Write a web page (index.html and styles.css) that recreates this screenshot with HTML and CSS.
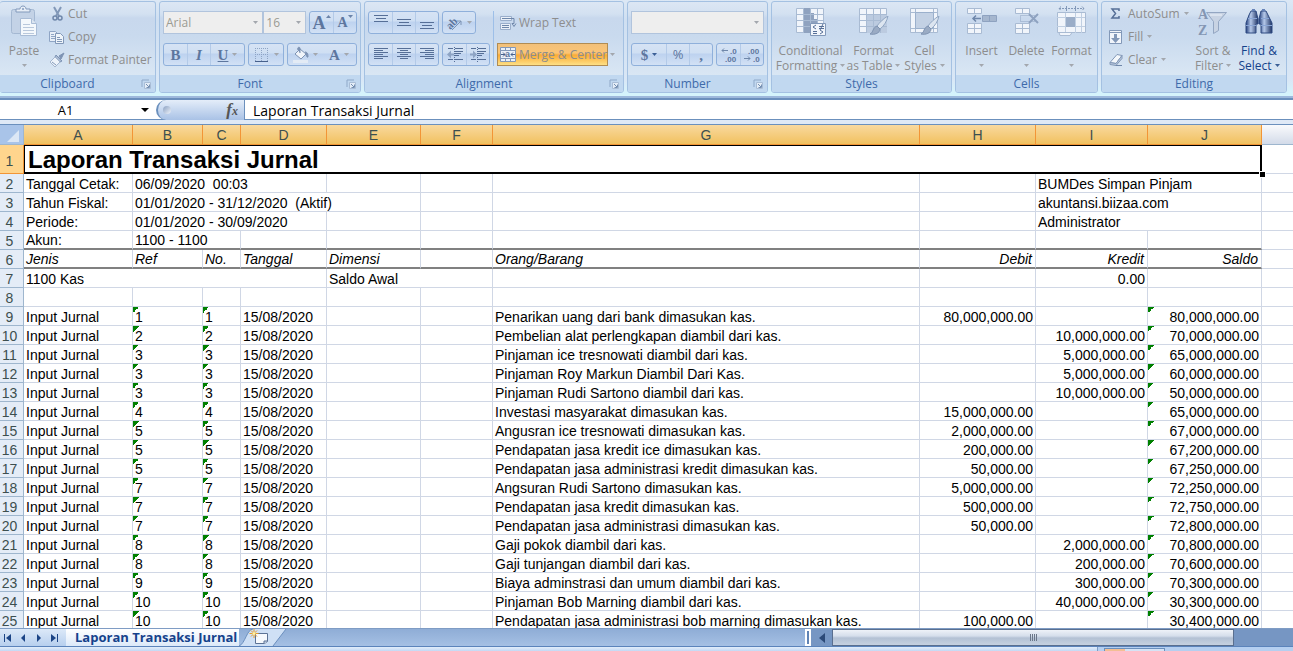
FILE: index.html
```html
<!DOCTYPE html>
<html lang="id">
<head>
<meta charset="utf-8">
<title>Laporan Transaksi Jurnal</title>
<link rel="stylesheet" href="styles.css">
</head>
<body>
<svg class="defs" aria-hidden="true">
  <symbol id="launcher" viewBox="0 0 10 10"><path d="M1 8V1h7" fill="none" stroke="#8fa9c9"/><path d="M3.500 9.500v-6h6v6z" fill="#e4edf7" stroke="#a9bdd6"/><path d="M5 5l3 3M8.500 5.500v3h-3" fill="none" stroke="#7590b3"/></symbol>
  <symbol id="caret" viewBox="0 0 5 3"><path d="M0 0h5L2.500 3z" fill="currentColor"/></symbol>
  <symbol id="brush" viewBox="0 0 20 20"><path d="M19 0c-4 2-9 7-11 10l3 3c4-3 7-8 8-13z" fill="#dce5f0" stroke="#8fa5c2"/><path d="M8 10l3 3c0 4-5 6-10 5 4-2 2-6 7-8z" fill="#9aabc4" stroke="#7f93b1"/></symbol>
</svg>

<header class="ribbon">
  <section class="group clipboard">
    <div class="body">
      <button class="big paste">
        <svg class="ico32" viewBox="0 0 32 32"><rect x="3.500" y="3.500" width="23" height="24" rx="2" fill="#c3d2e6" stroke="#a4b8d2"/><path d="M8 6h14V3h-4c0-4-6-4-6 0H8z" fill="#e6edf6" stroke="#8299bb"/><circle cx="15" cy="3" r="1" fill="#8299bb"/><path d="M12.500 12.500h11l5 5v12h-16z" fill="#f4f8fc" stroke="#a9bcd6"/><path d="M23.500 12.500v5h5" fill="#dbe5f1" stroke="#a9bcd6"/><path d="M15 18.500h7M15 21.500h11M15 24.500h11M15 27.500h11" stroke="#b9c8dc"/></svg>
        <span>Paste</span><svg class="caret"><use href="#caret"/></svg>
      </button>
      <div class="stack">
        <button class="small"><svg class="ico16" viewBox="0 0 16 16"><path d="M5 1l5 9M12 1L7 10" stroke="#8298b8" stroke-width="2"/><circle cx="6" cy="12" r="2" fill="none" stroke="#6f87aa" stroke-width="1.500"/><circle cx="11" cy="12" r="2" fill="none" stroke="#6f87aa" stroke-width="1.500"/></svg>Cut</button>
        <button class="small"><svg class="ico16" viewBox="0 0 16 16"><path d="M.5 2.500h6l2 2v8h-8z" fill="#e8eff8" stroke="#8fa5c5"/><path d="M2 5.500h3M2 7.500h4M2 9.500h4" stroke="#8fa5c5"/><path d="M6.500 4.500h5l3 3v7h-8z" fill="#eef4fa" stroke="#8298b8"/><path d="M8 8.500h3M8 10.500h5M8 12.500h5" stroke="#8298b8"/></svg>Copy</button>
        <button class="small"><svg class="ico16" viewBox="0 0 16 16"><path d="M15 1l-5 3 2 3z" fill="#7d93b4" stroke="#7d93b4"/><path d="M7 3l6 6-2 1-5-5z" fill="#a9bad2" stroke="#7d93b4"/><path d="M6 5L1 10l5 5 5-5z" fill="#edf3fa" stroke="#a4b6cf"/><path d="M3 10l4 3" stroke="#8298b8"/></svg>Format Painter</button>
      </div>
    </div>
    <footer><h2>Clipboard</h2><button class="launch" aria-label="Clipboard options"><svg><use href="#launcher"/></svg></button></footer>
  </section>

  <section class="group font">
    <div class="body rows">
      <div class="row">
        <span class="combo name"><select aria-label="Font"><option>Arial</option></select><svg class="caret"><use href="#caret"/></svg></span><span class="combo size"><select aria-label="Font size"><option>16</option></select><svg class="caret"><use href="#caret"/></svg></span>
        <div class="set"><button class="w24 grow">A<svg class="tick" viewBox="0 0 5 3"><path d="M0 3h5L2.500 0z"/></svg></button><button class="w24 grow less">A<svg class="tick" viewBox="0 0 5 3"><path d="M0 0h5L2.500 3z"/></svg></button></div>
      </div>
      <div class="row">
        <div class="set"><button class="w24 serif b">B</button><button class="w24 serif i">I</button><button class="w36 serif u"><u>U</u><svg class="caret"><use href="#caret"/></svg></button></div>
        <div class="set"><button class="w36" aria-label="Borders"><svg class="ico16" viewBox="0 0 16 16"><path d="M1.500 1v13M7.500 1v13M13.500 1v13M1 1.500h13M1 7.500h13" stroke="#8ea4c4" stroke-dasharray="1 1"/><path d="M1 14.500h13" stroke="#47618c"/></svg><svg class="caret"><use href="#caret"/></svg></button></div>
        <div class="set plain"><button class="w36" aria-label="Fill color"><svg class="ico16" viewBox="0 0 16 16"><path d="M7 2l6 5-5 5-6-5z" fill="#f1f5fa" stroke="#7d93b4"/><path d="M7 6V1c-1-2-3 0-2 2M12 5c3 0 3 3 3 5-1 1-2-2-2-3" fill="#7d93b4" stroke="#7d93b4"/><path d="M0 13h15v3H0z" fill="#e3ebf5"/></svg><svg class="caret"><use href="#caret"/></svg></button><button class="w36 serif a">A<svg class="caret"><use href="#caret"/></svg></button></div>
      </div>
    </div>
    <footer><h2>Font</h2><button class="launch" aria-label="Font options"><svg><use href="#launcher"/></svg></button></footer>
  </section>

  <section class="group align">
    <div class="body">
      <div class="rows">
        <div class="row">
          <div class="set"><button class="w24" aria-label="Top align"><svg class="ico16" viewBox="0 0 16 16"><path d="M1 .5h14M3 3.500h10M1 6.500h14" stroke="#566f97"/></svg></button><button class="w24" aria-label="Middle align"><svg class="ico16" viewBox="0 0 16 16"><path d="M1 4.500h14M3 7.500h10M1 10.500h14" stroke="#566f97"/></svg></button><button class="w24" aria-label="Bottom align"><svg class="ico16" viewBox="0 0 16 16"><path d="M1 7.500h14M3 10.500h10M1 13.500h14" stroke="#566f97"/></svg></button></div>
          <div class="set"><button class="w32" aria-label="Orientation"><svg class="ico16" viewBox="0 0 16 16"><text x="-1" y="11" transform="rotate(-45 6 8)" class="orient">ab</text><path d="M5 15L14 6M14 10V6h-4" fill="none" stroke="#7d93b4"/></svg><svg class="caret"><use href="#caret"/></svg></button></div>
        </div>
        <div class="row">
          <div class="set"><button class="w24" aria-label="Align left"><svg class="ico16" viewBox="0 0 16 16"><path d="M1 1.500h14M1 3.500h9M1 5.500h14M1 7.500h9M1 9.500h14M1 11.500h9" stroke="#566f97"/></svg></button><button class="w24" aria-label="Center"><svg class="ico16" viewBox="0 0 16 16"><path d="M1 1.500h14M4 3.500h8M1 5.500h14M4 7.500h8M1 9.500h14M4 11.500h8" stroke="#566f97"/></svg></button><button class="w24" aria-label="Align right"><svg class="ico16" viewBox="0 0 16 16"><path d="M1 1.500h14M6 3.500h9M1 5.500h14M6 7.500h9M1 9.500h14M6 11.500h9" stroke="#566f97"/></svg></button></div>
          <div class="set"><button class="w23" aria-label="Decrease indent"><svg class="ico16" viewBox="0 0 16 16"><path d="M1 1.500h5M8 1.500h8M8 4.500h8M8 6.500h6M8 8.500h4M1 12.500h5M8 12.500h8" stroke="#566f97"/><path d="M7.500 0v15" stroke="#566f97" stroke-dasharray="1 1"/><path d="M0 7.500l4-4v3h3v2H4v3z" fill="#8ea4c4"/></svg></button><button class="w23" aria-label="Increase indent"><svg class="ico16" viewBox="0 0 16 16"><path d="M1 1.500h5M8 1.500h8M8 4.500h8M8 6.500h6M8 8.500h4M1 12.500h5M8 12.500h8" stroke="#566f97"/><path d="M7.500 0v15" stroke="#566f97" stroke-dasharray="1 1"/><path d="M7 7.500l-4-4v3H0v2h3v3z" fill="#8ea4c4"/></svg></button></div>
        </div>
      </div>
      <div class="rows second">
        <button class="small wrap"><svg class="ico16" viewBox="0 0 16 16"><path d="M.5 1.500h11v4H.5zM.5 8.500h10v6H.5z" fill="#eaf0f8" stroke="#9aaecb"/><path d="M2 3.500h12v5h-2l2 3 2-3M2 10.500h7M2 12.500h7" fill="none" stroke="#6f87aa"/></svg>Wrap Text</button>
        <div class="row"><button class="small merge"><svg class="ico16" viewBox="0 0 16 16"><path d="M.5.5h15v14H.5z" fill="#eaf0f8" stroke="#8298b8"/><path d="M0 3.500h16M0 11.500h16M5.500 0v4M10.500 0v4M5.500 12v3M10.500 12v3" stroke="#8298b8"/><path d="M1 7.500h4M3 5.500l2 2-2 2M15 7.500h-4M13 5.500l-2 2 2 2" fill="none" stroke="#47618c"/><text x="5" y="10" class="tiny">a</text></svg>Merge &amp; Center</button><button class="drop" aria-label="Merge options"><svg class="caret"><use href="#caret"/></svg></button></div>
      </div>
    </div>
    <footer><h2>Alignment</h2><button class="launch" aria-label="Alignment options"><svg><use href="#launcher"/></svg></button></footer>
  </section>

  <section class="group number">
    <div class="body rows">
      <div class="row"><span class="combo format"><select aria-label="Number format"><option></option></select><svg class="caret"><use href="#caret"/></svg></span></div>
      <div class="row">
        <div class="set"><button class="w36 serif s">$<svg class="caret on"><use href="#caret"/></svg></button><button class="w24 pct">%</button><button class="w24 serif">,</button></div>
        <div class="set"><button class="w23" aria-label="Increase decimal"><svg class="ico16" viewBox="0 0 16 16"><text x="9" y="7" class="dec">.0</text><text x="4" y="15" class="dec">.00</text><path d="M7 3.500H1M3 1.500l-2 2 2 2" fill="none" stroke="#6f87aa"/></svg></button><button class="w23" aria-label="Decrease decimal"><svg class="ico16" viewBox="0 0 16 16"><text x="4" y="7" class="dec">.00</text><text x="9" y="15" class="dec">.0</text><path d="M0 11.500h6M4 9.500l2 2-2 2" fill="none" stroke="#6f87aa"/></svg></button></div>
      </div>
    </div>
    <footer><h2>Number</h2><button class="launch" aria-label="Number options"><svg><use href="#launcher"/></svg></button></footer>
  </section>

  <section class="group styles">
    <div class="body">
      <button class="big w68"><svg class="ico32" viewBox="0 0 32 32"><path d="M1.500 2.500h27v24h-27z" fill="#f1f5fb" stroke="#a9bbd3"/><path d="M9 2h7v5h-7zM9 7h10v6H9zM9 13h13v6H9zM9 19h6v8H9z" fill="#8fa2bf"/><path d="M1 8.500h28M1 14.500h28M1 20.500h28M8.500 2v25M15.500 2v25M22.500 2v25" stroke="#a9bbd3"/><path d="M15.500 17.500h15v12h-15z" fill="#f1f5fb" stroke="#8298b8"/><path d="M21 19l-3 2 3 2M18 25.500h4M18 27.500h4M24 20.500h5M24 22.500h5M28 18l-3 6M25 24l3 2-3 2" fill="none" stroke="#566f97"/></svg><span>Conditional</span><span>Formatting<svg class="caret"><use href="#caret"/></svg></span></button>
      <button class="big w58"><svg class="ico32" viewBox="0 0 32 32"><path d="M1.500 2.500h27v24h-27z" fill="#f1f5fb" stroke="#a9bbd3"/><path d="M8 8h21v19H8z" fill="#bccbe0"/><path d="M1 8.500h28M1 14.500h28M1 20.500h28M8.500 2v25M15.500 2v25M22.500 2v25" stroke="#a9bbd3"/><use href="#brush" x="11" y="10" width="20" height="20"/></svg><span>Format</span><span>as Table<svg class="caret"><use href="#caret"/></svg></span></button>
      <button class="big w46"><svg class="ico32" viewBox="0 0 32 32"><path d="M1.500 2.500h27v24h-27z" fill="#f1f5fb" stroke="#a9bbd3"/><path d="M1 6.500h28M1 22.500h28M6.500 2v25M24.500 2v25" stroke="#a9bbd3"/><path d="M6.500 6.500h18v16h-18z" fill="#c3d1e4" stroke="#9bb0cc"/><use href="#brush" x="11" y="10" width="20" height="20"/></svg><span>Cell</span><span>Styles<svg class="caret"><use href="#caret"/></svg></span></button>
    </div>
    <footer><h2>Styles</h2></footer>
  </section>

  <section class="group cells">
    <div class="body">
      <button class="big w46"><svg class="ico32" viewBox="0 0 32 32"><path d="M1.500 2.500h14v5h-14zM1.500 17.500h14v10h-14zM1.500 22.500h14M8.500 2v6M8.500 17v11" fill="#f1f5fb" stroke="#a9bbd3"/><path d="M16.500 9.500h14v6h-14zM23.500 9v7" fill="#a5b6ce" stroke="#8ea2c0"/><path d="M15 12.500H7M10 9.500l-3 3 3 3" fill="none" stroke="#6f87aa" stroke-width="1.500"/></svg><span>Insert</span><svg class="caret"><use href="#caret"/></svg></button>
      <button class="big w46"><svg class="ico32" viewBox="0 0 32 32"><path d="M4.500 2.500h14v5h-14zM4.500 17.500h14v10h-14zM4.500 22.500h14M11.500 2v6M11.500 17v11" fill="#f1f5fb" stroke="#a9bbd3"/><path d="M9.500 9.500h14v6h-14z" fill="none" stroke="#8ea2c0" stroke-dasharray="1 1"/><path d="M18 8l9 9M27 8l-9 9" stroke="#8ea2c0" stroke-width="2"/></svg><span>Delete</span><svg class="caret"><use href="#caret"/></svg></button>
      <button class="big w46"><svg class="ico32" viewBox="0 0 32 32"><path d="M3 2.500h25M5 .5l-2 2 2 2M26 .5l2 2-2 2M10.500 0v5M19.500 0v5" fill="none" stroke="#8298b8" stroke-dasharray="2 1"/><path d="M1.500 6.500h28v20h-28z" fill="#f1f5fb" stroke="#a9bbd3"/><path d="M1 11.500h28M1 20.500h28M9.500 7v20M19.500 7v20M25.500 7v20" stroke="#c0cfe2"/><path d="M10 11h9v10h-9z" fill="#9aadc8"/><path d="M3 26.500h13l-2 3H4z" fill="#f1f5fb" stroke="#a9bbd3"/></svg><span>Format</span><svg class="caret"><use href="#caret"/></svg></button>
    </div>
    <footer><h2>Cells</h2></footer>
  </section>

  <section class="group editing">
    <div class="body">
      <div class="stack">
        <button class="small"><svg class="ico16" viewBox="0 0 16 16"><path d="M11 5V3H4l3.500 4.500L4 12h7v-2" fill="none" stroke="#566f97" stroke-width="1.500"/></svg>AutoSum<svg class="caret"><use href="#caret"/></svg></button>
        <button class="small"><svg class="ico16" viewBox="0 0 16 16"><path d="M1.500 1.500h12v13h-12z" fill="#f1f5fb" stroke="#8298b8"/><path d="M1 3.500h13" stroke="#8298b8"/><path d="M6 5h3v4h3l-4.500 5L3 9h3z" fill="#8298b8"/></svg>Fill<svg class="caret"><use href="#caret"/></svg></button>
        <button class="small"><svg class="ico16" viewBox="0 0 16 16"><path d="M9 2.500l5 1-6 8-6-1z" fill="#f4f8fc" stroke="#8298b8"/><path d="M2 10.500l6 1 6-8v3l-6 7-6-1z" fill="#b9c8dd" stroke="#8298b8"/><path d="M8 13.500h6" stroke="#6f87aa"/></svg>Clear<svg class="caret"><use href="#caret"/></svg></button>
      </div>
      <button class="big w46"><svg class="ico32" viewBox="0 0 32 32"><text x="1" y="13" class="az">A</text><text x="1" y="29" class="az">Z</text><path d="M9.500 6.500h20l-8 9v9l-5 3v-12z" fill="#c8d3e3" stroke="#93a6c2"/><path d="M13 9h12" stroke="#edf3fa"/></svg><span>Sort &amp;</span><span>Filter<svg class="caret"><use href="#caret"/></svg></span></button>
      <button class="big w46 on"><svg class="ico32" viewBox="0 0 32 32"><defs><linearGradient id="lens"><stop offset="0" stop-color="#243f7c"/><stop offset=".4" stop-color="#b5c9ea"/><stop offset="1" stop-color="#1d3263"/></linearGradient></defs><path d="M8 5h5l2 8v5h-2v9H3V17l3-8z" fill="url(#lens)" stroke="#2e4a82"/><path d="M18 5h5l2 4 4 8v10H18v-9h-2v-5z" fill="url(#lens)" stroke="#2e4a82"/><path d="M5 12.500h9M18 12.500h8M3 19.500h10M18 19.500h11" stroke="#8aa6d6"/><path d="M9 4h3M19 4h3" stroke="#6683b8" stroke-width="2"/></svg><span>Find &amp;</span><span>Select<svg class="caret"><use href="#caret"/></svg></span></button>
    </div>
    <footer><h2>Editing</h2></footer>
  </section>
</header>

<div class="formula">
  <div class="namebox"><input aria-label="Name box" value="A1"><svg class="nbcaret" viewBox="0 0 8 4"><path d="M0 0h8L4 4z"/></svg></div>
  <div class="fx"><span class="knob"></span><button aria-label="Insert function"><i>f</i><i class="x">x</i></button></div>
  <input class="entry" aria-label="Formula bar" value="Laporan Transaksi Jurnal">
</div>

<main class="sheet">
<table>
<colgroup><col class="cn"><col class="ca"><col class="cb"><col class="cc"><col class="cd"><col class="ce"><col class="cf"><col><col class="ch"><col class="ci"><col class="cj"><col class="ck"></colgroup>
<thead><tr><th class="corner"><svg viewBox="0 0 12 12"><path d="M12 0v12H0z"/></svg></th><th>A</th><th>B</th><th>C</th><th>D</th><th>E</th><th>F</th><th>G</th><th>H</th><th>I</th><th>J</th><th class="rest"></th></tr></thead>
<tbody>
<tr class="title"><th>1</th><td colspan="10">Laporan Transaksi Jurnal</td><td></td></tr>
<tr><th>2</th><td>Tanggal Cetak:</td><td colspan="3">06/09/2020&nbsp; 00:03</td><td></td><td></td><td></td><td></td><td colspan="2">BUMDes Simpan Pinjam</td><td></td></tr>
<tr><th>3</th><td>Tahun Fiskal:</td><td colspan="4">01/01/2020 - 31/12/2020&nbsp; (Aktif)</td><td></td><td></td><td></td><td colspan="2">akuntansi.biizaa.com</td><td></td></tr>
<tr><th>4</th><td>Periode:</td><td colspan="3">01/01/2020 - 30/09/2020</td><td></td><td></td><td></td><td></td><td colspan="2">Administrator</td><td></td></tr>
<tr class="ruled"><th>5</th><td>Akun:</td><td colspan="2">1100 - 1100</td><td></td><td></td><td></td><td></td><td></td><td></td><td></td><td></td></tr>
<tr class="ruled heads"><th>6</th><td>Jenis</td><td>Ref</td><td>No.</td><td>Tanggal</td><td>Dimensi</td><td></td><td>Orang/Barang</td><td class="n">Debit</td><td class="n">Kredit</td><td class="n">Saldo</td><td></td></tr>
<tr><th>7</th><td colspan="4">1100 Kas</td><td colspan="2">Saldo Awal</td><td></td><td></td><td class="n">0.00</td><td></td><td></td></tr>
<tr><th>8</th><td></td><td></td><td></td><td></td><td></td><td></td><td></td><td></td><td></td><td></td><td></td></tr>
<tr><th>9</th><td>Input Jurnal</td><td class="g">1</td><td class="g">1</td><td>15/08/2020</td><td></td><td></td><td>Penarikan uang dari bank dimasukan kas.</td><td class="n">80,000,000.00</td><td class="n"></td><td class="n g">80,000,000.00</td><td></td></tr>
<tr><th>10</th><td>Input Jurnal</td><td class="g">2</td><td class="g">2</td><td>15/08/2020</td><td></td><td></td><td>Pembelian alat perlengkapan diambil dari kas.</td><td class="n"></td><td class="n">10,000,000.00</td><td class="n g">70,000,000.00</td><td></td></tr>
<tr><th>11</th><td>Input Jurnal</td><td class="g">3</td><td class="g">3</td><td>15/08/2020</td><td></td><td></td><td>Pinjaman ice tresnowati diambil dari kas.</td><td class="n"></td><td class="n">5,000,000.00</td><td class="n g">65,000,000.00</td><td></td></tr>
<tr><th>12</th><td>Input Jurnal</td><td class="g">3</td><td class="g">3</td><td>15/08/2020</td><td></td><td></td><td>Pinjaman Roy Markun Diambil Dari Kas.</td><td class="n"></td><td class="n">5,000,000.00</td><td class="n g">60,000,000.00</td><td></td></tr>
<tr><th>13</th><td>Input Jurnal</td><td class="g">3</td><td class="g">3</td><td>15/08/2020</td><td></td><td></td><td>Pinjaman Rudi Sartono diambil dari kas.</td><td class="n"></td><td class="n">10,000,000.00</td><td class="n g">50,000,000.00</td><td></td></tr>
<tr><th>14</th><td>Input Jurnal</td><td class="g">4</td><td class="g">4</td><td>15/08/2020</td><td></td><td></td><td>Investasi masyarakat dimasukan kas.</td><td class="n">15,000,000.00</td><td class="n"></td><td class="n g">65,000,000.00</td><td></td></tr>
<tr><th>15</th><td>Input Jurnal</td><td class="g">5</td><td class="g">5</td><td>15/08/2020</td><td></td><td></td><td>Angusran ice tresnowati dimasukan kas.</td><td class="n">2,000,000.00</td><td class="n"></td><td class="n g">67,000,000.00</td><td></td></tr>
<tr><th>16</th><td>Input Jurnal</td><td class="g">5</td><td class="g">5</td><td>15/08/2020</td><td></td><td></td><td>Pendapatan jasa kredit ice dimasukan kas.</td><td class="n">200,000.00</td><td class="n"></td><td class="n g">67,200,000.00</td><td></td></tr>
<tr><th>17</th><td>Input Jurnal</td><td class="g">5</td><td class="g">5</td><td>15/08/2020</td><td></td><td></td><td>Pendapatan jasa administrasi kredit dimasukan kas.</td><td class="n">50,000.00</td><td class="n"></td><td class="n g">67,250,000.00</td><td></td></tr>
<tr><th>18</th><td>Input Jurnal</td><td class="g">7</td><td class="g">7</td><td>15/08/2020</td><td></td><td></td><td>Angsuran Rudi Sartono dimasukan kas.</td><td class="n">5,000,000.00</td><td class="n"></td><td class="n g">72,250,000.00</td><td></td></tr>
<tr><th>19</th><td>Input Jurnal</td><td class="g">7</td><td class="g">7</td><td>15/08/2020</td><td></td><td></td><td>Pendapatan jasa kredit dimasukan kas.</td><td class="n">500,000.00</td><td class="n"></td><td class="n g">72,750,000.00</td><td></td></tr>
<tr><th>20</th><td>Input Jurnal</td><td class="g">7</td><td class="g">7</td><td>15/08/2020</td><td></td><td></td><td>Pendapatan jasa administrasi dimasukan kas.</td><td class="n">50,000.00</td><td class="n"></td><td class="n g">72,800,000.00</td><td></td></tr>
<tr><th>21</th><td>Input Jurnal</td><td class="g">8</td><td class="g">8</td><td>15/08/2020</td><td></td><td></td><td>Gaji pokok diambil dari kas.</td><td class="n"></td><td class="n">2,000,000.00</td><td class="n g">70,800,000.00</td><td></td></tr>
<tr><th>22</th><td>Input Jurnal</td><td class="g">8</td><td class="g">8</td><td>15/08/2020</td><td></td><td></td><td>Gaji tunjangan diambil dari kas.</td><td class="n"></td><td class="n">200,000.00</td><td class="n g">70,600,000.00</td><td></td></tr>
<tr><th>23</th><td>Input Jurnal</td><td class="g">9</td><td class="g">9</td><td>15/08/2020</td><td></td><td></td><td>Biaya adminstrasi dan umum diambil dari kas.</td><td class="n"></td><td class="n">300,000.00</td><td class="n g">70,300,000.00</td><td></td></tr>
<tr><th>24</th><td>Input Jurnal</td><td class="g">10</td><td class="g">10</td><td>15/08/2020</td><td></td><td></td><td>Pinjaman Bob Marning diambil dari kas.</td><td class="n"></td><td class="n">40,000,000.00</td><td class="n g">30,300,000.00</td><td></td></tr>
<tr><th>25</th><td>Input Jurnal</td><td class="g">10</td><td class="g">10</td><td>15/08/2020</td><td></td><td></td><td>Pendapatan jasa administrasi bob marning dimasukan kas.</td><td class="n">100,000.00</td><td class="n"></td><td class="n g">30,400,000.00</td><td></td></tr>
</tbody>
</table>
</main>

<nav class="tabs">
  <div class="steps">
    <button aria-label="First sheet"><svg viewBox="0 0 8 8"><path d="M0 0h1v8H0zM7 0v8L2 4z"/></svg></button>
    <button aria-label="Previous sheet"><svg viewBox="0 0 8 8"><path d="M6 0v8L2 4z"/></svg></button>
    <button aria-label="Next sheet"><svg viewBox="0 0 8 8"><path d="M2 0v8l4-4z"/></svg></button>
    <button aria-label="Last sheet"><svg viewBox="0 0 8 8"><path d="M1 0v8l5-4zM7 0h1v8H7z"/></svg></button>
  </div>
  <button class="tab">Laporan Transaksi Jurnal</button>
  <button class="new" aria-label="Insert worksheet"><svg viewBox="0 0 48 17"><path d="M0 17C6 15 8 0 14 0h33L34 17z" fill="#cfe0f5"/><path d="M0 17C6 15 8 0 14 0M47 0L34 17" fill="none" stroke="#6b8fbe"/><path d="M16.500 4.500h12v8l-3 2h-9z" fill="#f6f9fd" stroke="#5c7396"/><path d="M25 15v-3h4" fill="#c5d2e4" stroke="#5c7396"/><path d="M15 0v9M10.500 4.500h9M12 1.500l6 6M18 1.500l-6 6" stroke="#e59b2c"/><circle cx="15" cy="4.500" r="1.500" fill="#fff2a0"/></svg></button>
  <div class="hscroll">
    <span class="split"></span>
    <button class="left" aria-label="Scroll left"><svg viewBox="0 0 6 10"><path d="M6 0v10L0 5z"/></svg></button>
    <div class="thumb"><i></i><i></i><i></i><i></i></div>
  </div>
</nav>
<footer class="status"><div class="views"><span></span></div></footer>
</body>
</html>
```
FILE: styles.css
```css
* { box-sizing: border-box; }
body {
  margin: 0;
  height: 100vh;
  display: flex;
  flex-direction: column;
  overflow: hidden;
  background: #fff;
  font: 12px/15px "Open Sans", "Noto Sans", sans-serif;
  color: #8d8d8d;
}
button {
  margin: 0;
  padding: 0;
  border: 0;
  background: none;
  font: inherit;
  color: inherit;
  white-space: nowrap;
}
.defs { display: none; }
svg { display: block; flex: none; overflow: visible; }
.caret { width: 5px; height: 3px; color: #a3a7ad; }
.ico16 { width: 16px; height: 16px; }
.ico32 { width: 32px; height: 32px; }

/* Ribbon */
.ribbon {
  flex: none;
  display: flex;
  gap: 3px;
  padding: 1px 0 3px;
  background: linear-gradient(#dce8f5 0, #cfdff1 20px, #d9e7f6 80px, #d5f4fc 94px);
  border-bottom: 2px solid #9db9dc;
}
.group {
  flex: none;
  display: flex;
  flex-direction: column;
  border: 1px solid #a4c1e2;
  border-radius: 3px;
  overflow: hidden;
  background: linear-gradient(#dce7f4 0, #d3e1f1 12px, #c8d8ed 16px, #c9daee 34px, #dae7f4 75px);
}
.clipboard { width: 156px; border-left: 0; }
.font { width: 202px; }
.align { width: 260px; }
.number { width: 141px; }
.styles { width: 181px; }
.cells { width: 143px; }
.editing { width: 186px; }
.body { height: 73px; display: flex; padding: 0 3px; }
.group footer {
  display: flex;
  align-items: center;
  height: 17px;
  background: #c1d8f0;
  color: #3e6aaa;
}
.group h2 { flex: 1; margin: 0; font: inherit; text-align: center; }
.launch { margin: 0 4px 0 6px; }
.launch svg { width: 10px; height: 10px; }
.big {
  display: flex;
  flex-direction: column;
  align-items: center;
  padding-top: 4px;
}
.big .ico32 { margin-bottom: 5px; }
.big span { display: flex; align-items: center; gap: 3px; }
.big > .caret { margin-top: 6px; }
.on { color: #15428b; }
.on .caret, .caret.on { color: #3b5f96; }
.stack { display: flex; flex-direction: column; }
.small { display: flex; align-items: center; gap: 3px; height: 23px; }
.editing .small { gap: 4px; }
.paste { width: 42px; margin-right: 4px; }
.rows { display: flex; flex-direction: column; gap: 9px; padding-top: 9px; }
.body.rows { padding: 9px 3px 0; }
.row { display: flex; gap: 3px; height: 23px; }
.w23, .w24 { width: 23px; }
.w32 { width: 32px; }
.w36 { width: 34px; }
.w46 { width: 46px; }
.w58 { width: 56px; }
.w68 { width: 70px; }
.set {
  display: flex;
  border: 1px solid #8fb0db;
  border-radius: 3px;
  background: linear-gradient(#d6e3f4 0, #cfdff3 9px, #bdd2ef 10px, #d2e1f5);
}
.set button {
  display: flex;
  align-items: center;
  justify-content: center;
  gap: 4px;
  color: #5d769e;
}
.set button + button { border-left: 1px solid #b3cae8; }
.plain button + button { border-left: 0; }
.serif { font: bold 15px/20px "Liberation Serif", serif; }
.i { font-style: italic; }
.pct { font-size: 13px; }
svg text { fill: #5d769e; }
.set .grow { align-items: flex-end; gap: 0; font: bold 18px/20px "Liberation Serif", serif; }
.set .less { font-size: 14px; }
.tick { width: 5px; height: 3px; align-self: flex-start; margin-top: 3px; fill: #6b84a9; }
.orient { font: bold 11px "Liberation Serif", serif; }
.tiny { font: bold 9px "Liberation Sans", sans-serif; }
.dec { font: bold 8px/8px "Liberation Sans", sans-serif; }
.az { font: bold 14px "Liberation Serif", serif; fill: #8496b3; }
.combo {
  display: flex;
  align-items: center;
  border: 1px solid #b1c4dd;
  background: #eee;
  padding-right: 4px;
}
.combo select {
  appearance: none;
  flex: 1;
  min-width: 0;
  border: 0;
  padding: 0 2px;
  background: none;
  font: inherit;
  color: #9b9b93;
}
.name { width: 101px; }
.size { width: 43px; margin-left: -3px; }
.format { flex: 1; }
.second { margin-left: 3px; padding-left: 4px; background: linear-gradient(#9dbfe8, #9dbfe8) 0 9px / 1px 55px no-repeat; }
.wrap { padding-left: 3px; }
.merge {
  width: 111px;
  padding: 0 2px;
  border: 1px solid #b08c53;
  background: linear-gradient(#f2c07a 0, #fbc575 9px, #fbab35 11px, #fde086);
}
.drop { padding: 0 2px; }
.row:has(.drop) { gap: 0; }
.styles .body, .cells .body { justify-content: center; }
.editing .body { padding-left: 6px; }
.editing .stack { width: 82px; }

/* Formula bar */
.formula {
  flex: none;
  display: flex;
  height: 27px;
  border-top: 2px solid #6b90bd;
  border-bottom: 1px solid #6b90bd;
  box-shadow: inset 0 -4px #dfe9f6, inset 0 -5px #6b90bd;
  padding-bottom: 4px;
  color: #000;
}
.formula input {
  min-width: 0;
  border: 0;
  padding: 0;
  background: none;
  font: 14px "Open Sans", sans-serif;
  color: #000;
}
.namebox { display: flex; align-items: center; width: 156px; padding-right: 7px; }
.namebox input { flex: 1; width: 0; text-align: center; font-size: 13px; padding-right: 10px; }
.nbcaret { width: 8px; height: 4px; }
.fx {
  display: flex;
  align-items: center;
  justify-content: space-between;
  width: 89px;
  padding: 0 6px 0 5px;
  border-left: 2px solid #6b90bd;
  border-right: 1px solid #6b90bd;
  border-radius: 12px 0 0 12px;
  background: linear-gradient(#e4edf9, #a9c2e6);
}
.knob { width: 8px; height: 8px; border-radius: 50%; background: linear-gradient(135deg, #8ba1c2, #eef3fa); }
.fx button { font: italic bold 17px/18px "Liberation Serif", serif; color: #555; }
.fx .x { font-size: 12px; }
.entry { flex: 1; margin-left: 8px; }

/* Worksheet */
.sheet {
  flex: 1;
  min-height: 0;
  overflow: hidden;
  font: 14px/16px "Liberation Sans", Arial, sans-serif;
  color: #000;
}
table {
  width: 100%;
  table-layout: fixed;
  border-collapse: separate;
  border-spacing: 0;
}
.cn { width: 24px; }
.ca { width: 109px; }
.cb { width: 70px; }
.cc { width: 38px; }
.cd { width: 86px; }
.ce { width: 94px; }
.cf { width: 72px; }
.ch { width: 116px; }
.ci { width: 112px; }
.cj { width: 114px; }
.ck { width: 31px; }
th { padding: 2px 4px 0 0; font-weight: normal; color: #3d4f4f; }
thead th {
  height: 20px;
  padding: 1px 0 0;
  border-right: 1px solid #f29536;
  border-bottom: 1px solid #f29536;
  background: linear-gradient(#f9d99f, #f1c15f);
}
thead .corner { background: #a9c4e9; border-color: #9eb6ce; padding: 2px 4px 0 7px; }
.corner svg { width: 12px; height: 12px; fill: #dce7f5; }
thead .rest { border-color: #9eb6ce; background: linear-gradient(#f9fafc, #d3dbe9); border-right: 0; }
tbody th {
  height: 19px;
  border-right: 1px solid #9eb6ce;
  border-bottom: 1px solid #9eb6ce;
  background: #e4ecf7;
}
td {
  height: 19px;
  padding: 2px 2px 0;
  overflow: hidden;
  border-right: 1px solid #d0d7e5;
  border-bottom: 1px solid #d0d7e5;
  white-space: nowrap;
}
td:last-child { border-right: 0; }
.n { text-align: right; }
.g { background: linear-gradient(135deg, #008000 50%, transparent 50%) 0 0 / 6px 6px no-repeat; }
.title th {
  height: 29px;
  padding-top: 4px;
  background: #ffd58d;
  border-color: #f29536;
}
.title td { font: bold 24px/26px "Liberation Sans", Arial, sans-serif; padding: 0 4px; }
.title td[colspan] {
  position: relative;
  overflow: visible;
  border-right: 0;
  border-bottom: 0;
  box-shadow: inset 1px 1px #000, inset -2px -2px #000;
}
.title td[colspan]::after {
  content: "";
  position: absolute;
  right: -3px;
  bottom: -3px;
  width: 5px;
  height: 5px;
  background: #000;
  outline: 1px solid #fff;
}
.ruled td:not(:last-child) { border-bottom: 2px solid #808080; padding-top: 1px; }
.heads { font-style: italic; }
.heads th { font-style: normal; }
.heads .n { padding-right: 3px; }

/* Sheet tabs and scroll bar */
.tabs {
  flex: none;
  display: flex;
  height: 18px;
  border-top: 1px solid #7f9cc4;
  background: linear-gradient(#8fadd6, #a5c0e4);
}
.steps {
  display: flex;
  width: 66px;
  padding-right: 4px;
  background: linear-gradient(#dce9f8, #b7cfee);
}
.steps button { flex: 1; display: flex; justify-content: center; align-items: center; }
.steps svg { width: 8px; height: 8px; fill: #1c4586; }
.tab {
  padding: 0 2px 0 9px;
  background: linear-gradient(#fff, #dce9f9);
  font: bold 13px/17px "Open Sans", sans-serif;
  color: #15428b;
}
.new svg { width: 48px; height: 17px; }
.hscroll {
  display: flex;
  align-items: stretch;
  width: 488px;
  margin-left: auto;
  background: #7696c3;
}
.split { width: 6px; border: 2px solid #fff; background: #5f83b5; }
.left { width: 21px; display: flex; align-items: center; justify-content: center; }
.left svg { width: 6px; height: 10px; fill: #2c4a78; }
.thumb {
  display: flex;
  justify-content: center;
  align-items: center;
  gap: 1px;
  flex: 1;
  margin-right: 59px;
  border: 1px solid #5a6f8f;
  background: linear-gradient(#eef2f8 0, #d5deeb 6px, #b3c1d4 8px, #c6d1e0);
}
.thumb i { width: 1px; height: 7px; background: #6b7789; }
.status {
  flex: none;
  display: flex;
  height: 5px;
  border-top: 1px solid #5b83bb;
  background: linear-gradient(#e2edfa, #c3d9f5);
}
.views {
  width: 196px;
  margin-left: auto;
  padding: 1px 0 0 6px;
  border-left: 1px solid #7f9cc4;
  background: #b5cff0;
}
.views span {
  display: block;
  width: 61px;
  height: 3px;
  border: 1px solid #6b90bd;
  border-bottom: 0;
  background: linear-gradient(90deg, #f3bf94 20px, #d5e3f5 20px);
}
```
